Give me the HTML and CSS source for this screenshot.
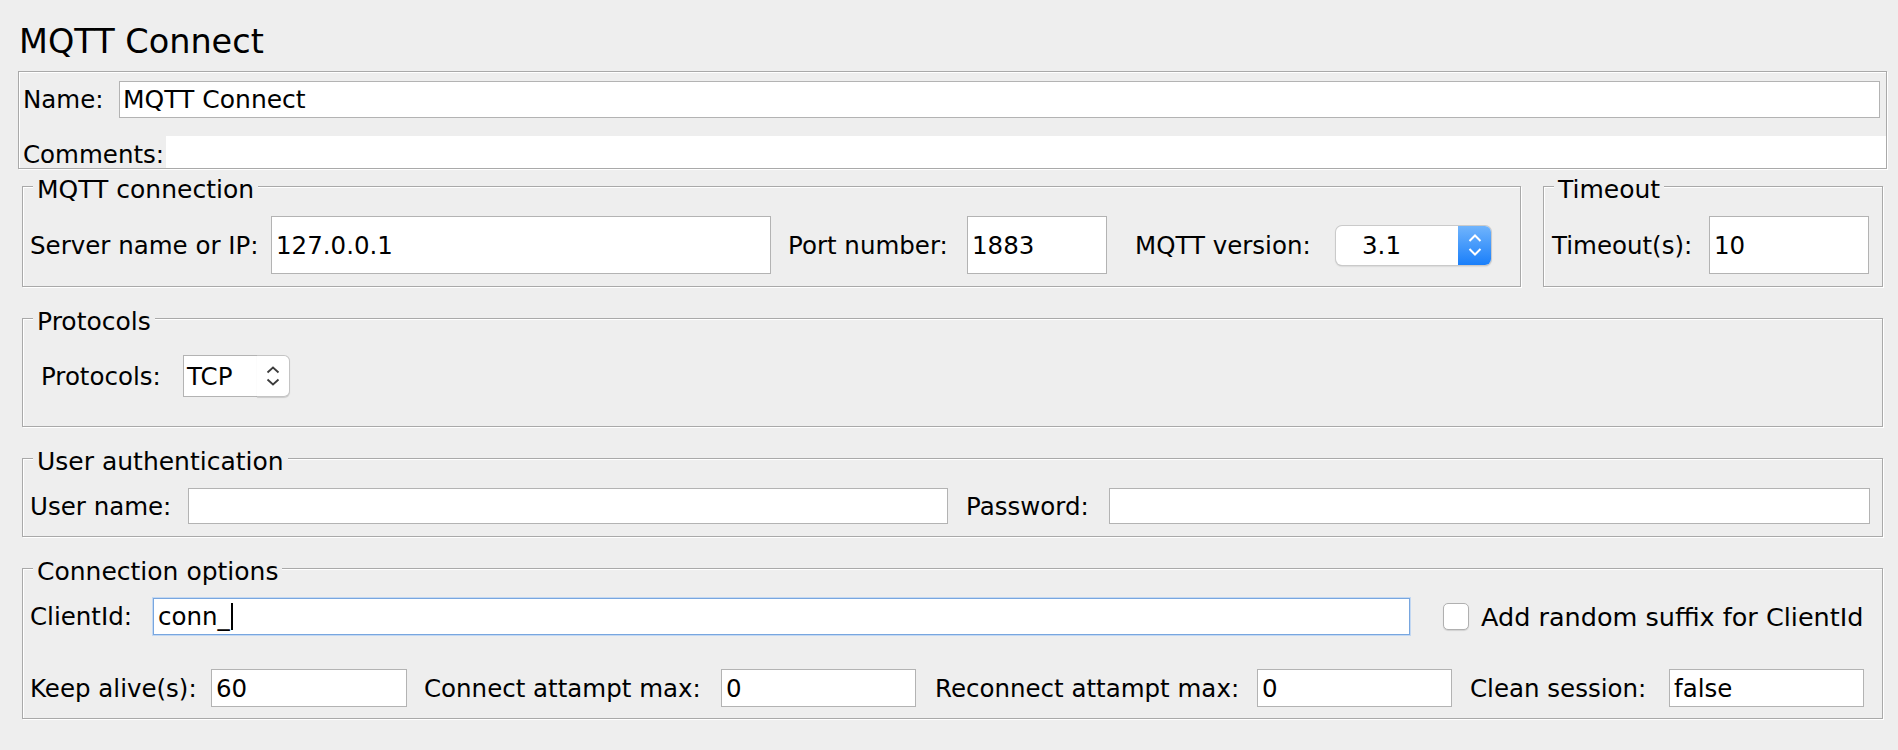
FILE: index.html
```html
<!DOCTYPE html>
<html lang="en">
<head>
<meta charset="utf-8">
<title>MQTT Connect</title>
<link rel="stylesheet" href="styles.css">
</head>
<body>
<div class="page">
  <h1 class="title">MQTT Connect</h1>

  <div class="name-panel">
    <div class="name-row">
      <label class="lbl w-name">Name:</label>
      <input class="field grow h37" value="MQTT Connect">
    </div>
    <div class="comments-row">
      <span class="lbl w-comments">Comments:</span>
      <div class="comments-area"></div>
    </div>
  </div>

  <div class="groups-row">
    <fieldset class="group g-mqtt">
      <legend>MQTT connection</legend>
      <div class="row h58">
        <label class="lbl w-server">Server name or IP:</label>
        <input class="field h58 w-server-in" value="127.0.0.1">
        <label class="lbl w-port gap17">Port number:</label>
        <input class="field h58 w-port-in" value="1883">
        <label class="lbl w-version gap28">MQTT version:</label>
        <div class="vcombo">
          <span class="vcombo-text">3.1</span>
          <span class="vcombo-btn">
            <svg width="14" height="22" viewBox="0 0 14 22"><polyline points="1.5,7 7,1.5 12.5,7" fill="none" stroke="#fff" stroke-width="2"/><polyline points="1.5,15 7,20.5 12.5,15" fill="none" stroke="#fff" stroke-width="2"/></svg>
          </span>
        </div>
      </div>
    </fieldset>
    <fieldset class="group g-timeout">
      <legend>Timeout</legend>
      <div class="row h58">
        <label class="lbl w-timeout">Timeout(s):</label>
        <input class="field h58 w-timeout-in" value="10">
      </div>
    </fieldset>
  </div>

  <fieldset class="group g-proto">
    <legend>Protocols</legend>
    <div class="row proto-row">
      <label class="lbl w-proto">Protocols:</label>
      <div class="pcombo">
        <span class="pcombo-text">TCP</span>
        <span class="pcombo-btn">
          <svg width="14" height="20" viewBox="0 0 14 20"><polyline points="1.5,6.5 7,1.5 12.5,6.5" fill="none" stroke="#3c3c3c" stroke-width="1.8"/><polyline points="1.5,13.5 7,18.5 12.5,13.5" fill="none" stroke="#3c3c3c" stroke-width="1.8"/></svg>
        </span>
      </div>
    </div>
  </fieldset>

  <fieldset class="group g-auth">
    <legend>User authentication</legend>
    <div class="row h36">
      <label class="lbl w-user">User name:</label>
      <input class="field h36 w-user-in" value="">
      <label class="lbl w-pass gap18">Password:</label>
      <input class="field h36 w-pass-in" type="password" value="">
    </div>
  </fieldset>

  <fieldset class="group g-opts">
    <legend>Connection options</legend>
    <div class="row h37">
      <label class="lbl w-client">ClientId:</label>
      <div class="field focused h37 w-client-in"><span>conn_</span><span class="caret"></span></div>
      <span class="checkbox"></span>
      <span class="check-label">Add random suffix for ClientId</span>
    </div>
    <div class="row h38 row-second">
      <label class="lbl w-keep">Keep alive(s):</label>
      <input class="field h38 w-small" value="60">
      <label class="lbl w-connect gap17">Connect attampt max:</label>
      <input class="field h38 w-small2" value="0">
      <label class="lbl w-reconnect gap19">Reconnect attampt max:</label>
      <input class="field h38 w-small2" value="0">
      <label class="lbl w-clean gap18">Clean session:</label>
      <input class="field h38 w-small2" value="false">
    </div>
  </fieldset>
</div>
</body>
</html>
```

FILE: styles.css
```css
* { box-sizing: border-box; }

html, body {
  margin: 0;
  padding: 0;
}

body {
  width: 1898px;
  height: 750px;
  overflow: hidden;
  background: #eeeeee;
  color: #000;
  font-family: "DejaVu Sans", "Noto Sans", sans-serif;
  font-size: 24.5px;
}

.page {
  padding: 22px 11px 0 18px;
}

.title {
  margin: 0;
  padding-left: 1px;
  height: 40px;
  font-size: 33.5px;
  line-height: 40px;
  font-weight: normal;
}

/* Name / comments panel */
.name-panel {
  margin-top: 9px;
  height: 98px;
  border: 1px solid #a9a9a9;
  box-shadow: 1px 1px 0 #fff, inset 1px 1px 0 #fff;
  padding: 9px 6px 0 4px;
  overflow: hidden;
}

.name-row {
  display: flex;
  align-items: center;
}

.comments-row {
  display: flex;
  height: 32px;
  margin-top: 18px;
  margin-right: -6px;
  overflow: hidden;
}

.comments-row .lbl {
  line-height: 37px;
}

.comments-area {
  flex: 1;
  background: #fff;
}

/* generic */
.lbl {
  flex: none;
  white-space: nowrap;
}

.field {
  flex: none;
  font: inherit;
  font-size: 24.5px;
  color: #000;
  background: #fff;
  border: 1px solid #b3b3b3;
  border-radius: 0;
  padding: 0 4px;
  margin: 0;
  outline: none;
}

.grow { flex: 1; }

.name-row .field { padding-left: 3px; font-size: 25px; }

.h36 { height: 36px; }
.h37 { height: 37px; }
.h38 { height: 38px; }
.h58 { height: 58px; }

.row {
  display: flex;
  align-items: center;
}

.gap17 { margin-left: 17px; }
.gap18 { margin-left: 18px; }
.gap19 { margin-left: 19px; }
.gap28 { margin-left: 28px; }

/* groups (etched titled borders) */
.groups-row {
  display: flex;
  gap: 22px;
  margin: 2px 4px 0;
}

.group {
  margin: 16px 4px 0;
  min-width: 0;
  border: 1px solid #a9a9a9;
  box-shadow: 1px 1px 0 #fff, inset 1px 1px 0 #fff;
  padding: 14px 11px 12px 7px;
}

.groups-row .group {
  margin: 0;
}

.group legend {
  margin-left: 3px;
  padding: 6px 4px 0;
  font-size: 25px;
  line-height: 25px;
  background: #eeeeee;
}

.g-mqtt { width: 1499px; flex: none; }
.g-timeout { flex: 1; padding-left: 8px; }
.g-timeout legend { margin-left: 2px; }

.g-proto { padding-top: 21px; padding-bottom: 29px; }
.g-auth { padding-bottom: 12px; }
.g-opts { padding-bottom: 11px; }

.row-second { margin-top: 34px; }

/* widths */
.w-name { width: 96px; }
.w-comments { width: 143px; }
.w-server { width: 241px; }
.w-server-in { width: 500px; }
.w-port { width: 179px; }
.w-port-in { width: 140px; }
.w-version { width: 201px; }
.w-timeout { width: 157px; }
.w-timeout-in { width: 160px; }
.w-proto { width: 142px; margin-left: 11px; }
.w-user { width: 158px; }
.w-user-in { width: 760px; }
.w-pass { width: 143px; }
.w-pass-in { width: 761px; }
.w-client { width: 123px; }
.w-client-in { width: 1257px; }
.w-keep { width: 181px; }
.w-small { width: 196px; }
.w-small2 { width: 195px; }
.w-connect { width: 297px; }
.w-reconnect { width: 322px; }
.w-clean { width: 199px; }

/* version combo (blue aqua style) */
.vcombo {
  flex: none;
  display: flex;
  width: 155px;
  height: 39px;
  border-radius: 6px;
  background: #fff;
  box-shadow: 0 0 0 1px #cacaca, 0 1px 2px rgba(0, 0, 0, 0.28);
  overflow: hidden;
}

.vcombo-text {
  flex: 1;
  padding-left: 26px;
  line-height: 39px;
}

.vcombo-btn {
  width: 33px;
  display: flex;
  align-items: center;
  justify-content: center;
  background: linear-gradient(#70b4fc, #1a7ffa);
}

/* protocols combo */
.pcombo {
  flex: none;
  display: flex;
  height: 42px;
}

.pcombo-text {
  width: 74px;
  height: 42px;
  padding-left: 3px;
  line-height: 42px;
  background: #fff;
  border: 1px solid #b3b3b3;
  border-right: none;
}

.pcombo-btn {
  width: 33px;
  height: 42px;
  display: flex;
  align-items: center;
  justify-content: center;
  background: #fff;
  border: 1px solid #c4c4c4;
  border-left: none;
  border-radius: 0 6px 6px 0;
  box-shadow: 0 1px 1px rgba(0, 0, 0, 0.15);
}

/* focused client id field */
.focused {
  display: flex;
  align-items: center;
  border-color: #78a6df;
  box-shadow: 0 0 0 1px #c3d8f2;
}

.caret {
  display: inline-block;
  width: 2px;
  height: 27px;
  margin-left: 1px;
  background: #000;
}

.checkbox {
  flex: none;
  width: 26px;
  height: 27px;
  margin-left: 33px;
  background: #fff;
  border: 1px solid #b0b0b0;
  border-radius: 5px;
  box-shadow: 0 1px 1px rgba(0, 0, 0, 0.12);
}

.check-label {
  margin-left: 12px;
  white-space: nowrap;
  font-size: 25.5px;
}
```
